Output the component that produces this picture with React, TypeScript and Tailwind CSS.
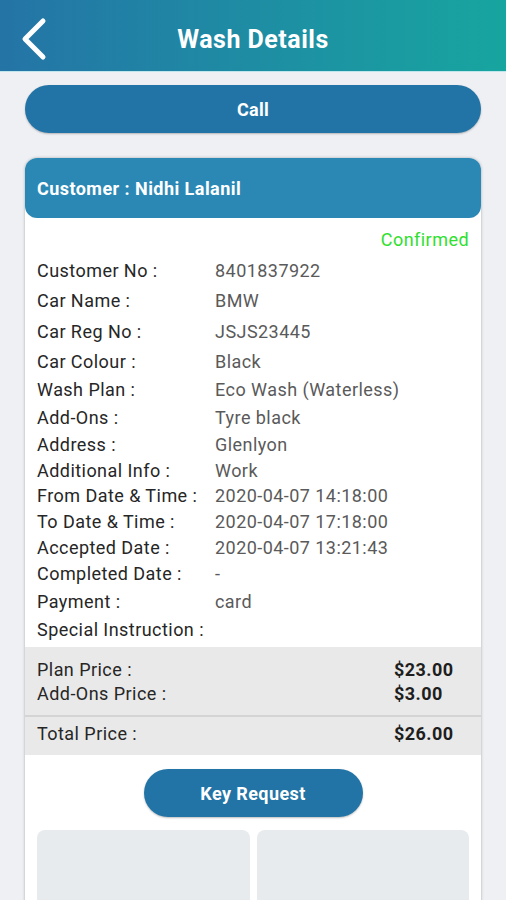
import React from 'react'

const rows: { label: string; value: string; h: string }[] = [
  { label: 'Customer No :', value: '8401837922', h: 'h-[29px]' },
  { label: 'Car Name :', value: 'BMW', h: 'h-[31px]' },
  { label: 'Car Reg No :', value: 'JSJS23445', h: 'h-[30px]' },
  { label: 'Car Colour :', value: 'Black', h: 'h-[30px]' },
  { label: 'Wash Plan :', value: 'Eco Wash (Waterless)', h: 'h-[27px]' },
  { label: 'Add-Ons :', value: 'Tyre black', h: 'h-[28px]' },
  { label: 'Address :', value: 'Glenlyon', h: 'h-[27px]' },
  { label: 'Additional Info :', value: 'Work', h: 'h-[25px]' },
  { label: 'From Date & Time :', value: '2020-04-07 14:18:00', h: 'h-[25px]' },
  { label: 'To Date & Time :', value: '2020-04-07 17:18:00', h: 'h-[26px]' },
  { label: 'Accepted Date :', value: '2020-04-07 13:21:43', h: 'h-[26px]' },
  { label: 'Completed Date :', value: '-', h: 'h-[27px]' },
  { label: 'Payment :', value: 'card', h: 'h-[28px]' },
  { label: 'Special Instruction :', value: '', h: 'h-[28px]' },
]

export default function App() {
  return (
    <div className="min-h-screen bg-[#eff0f4] font-['Roboto',sans-serif] overflow-hidden">
      {/* Header */}
      <div className="relative h-[72px] flex items-center justify-center bg-gradient-to-r from-[#2474a6] to-[#17a59f] border-b border-[#bfe6ec]">
        <svg className="absolute left-[18px] top-[17px]" width="32" height="44" viewBox="0 0 32 44" fill="none">
          <path d="M25 4 L7 22 L25 40" stroke="white" strokeWidth="5" strokeLinecap="round" strokeLinejoin="round" />
        </svg>
        <h1 className="text-white text-[25px] font-bold tracking-[0.5px] mt-[8px]">Wash Details</h1>
      </div>

      {/* Call */}
      <div className="px-[25px] mt-[13px]">
        <button className="w-full h-[48px] rounded-full bg-[#2374a6] text-white text-[18px] font-bold tracking-[0.3px] shadow-[0_1px_2px_rgba(0,0,0,0.25)]">
          Call
        </button>
      </div>

      {/* Card */}
      <div className="mx-[25px] mt-[25px] bg-white rounded-t-[12px] shadow-[0_0_3px_rgba(0,0,0,0.3)] tracking-[0.45px]">
        <div className="h-[60px] rounded-[12px] bg-[#2b88b5] flex items-center px-[12px]">
          <p className="text-white text-[18px] font-bold">Customer : Nidhi Lalanil</p>
        </div>

        <div className="h-[38px] flex justify-end items-end pr-[12px] pb-[3px]">
          <span className="text-[18px] text-[#2fe02f]">Confirmed</span>
        </div>

        <div className="px-[12px] pb-[4px]">
          {rows.map((r) => (
            <div key={r.label} className={`${r.h} flex items-center text-[18px]`}>
              <span className="w-[178px] shrink-0 text-[#262626]">{r.label}</span>
              <span className="text-[#5a5a5a]">{r.value}</span>
            </div>
          ))}
        </div>

        {/* Prices */}
        <div className="bg-[#e9e9e9] pt-[10px] pb-[10px] px-[12px] text-[18px]">
          <div className="h-[24px] flex items-center">
            <span className="flex-1 text-[#262626]">Plan Price :</span>
            <span className="w-[75px] font-bold text-[#1e1e1e]">$23.00</span>
          </div>
          <div className="h-[24px] flex items-center">
            <span className="flex-1 text-[#262626]">Add-Ons Price :</span>
            <span className="w-[75px] font-bold text-[#1e1e1e]">$3.00</span>
          </div>
        </div>
        <div className="h-[2px] bg-[#d4d4d4]" />
        <div className="bg-[#e9e9e9] h-[38px] px-[12px] pb-[6px] flex items-center text-[18px]">
          <span className="flex-1 text-[#262626]">Total Price :</span>
          <span className="w-[75px] font-bold text-[#1e1e1e]">$26.00</span>
        </div>

        <div className="flex justify-center pt-[14px]">
          <button className="w-[219px] h-[48px] rounded-full bg-[#2374a6] text-white text-[18px] font-bold tracking-[0.4px] shadow-[0_1px_2px_rgba(0,0,0,0.25)]">
            Key Request
          </button>
        </div>

        <div className="grid grid-cols-2 gap-[7px] px-[12px] pt-[13px]">
          <div className="h-[120px] rounded-[8px] bg-[#e8ebee]" />
          <div className="h-[120px] rounded-[8px] bg-[#e8ebee]" />
        </div>
      </div>
    </div>
  )
}
